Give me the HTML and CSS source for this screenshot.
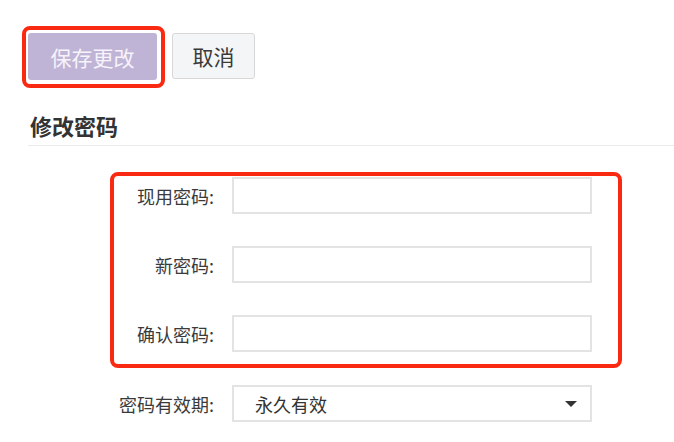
FILE: index.html
```html
<!DOCTYPE html>
<html lang="zh-CN">
<head>
    <meta charset="UTF-8">
    <title>修改密码</title>
    <link rel="stylesheet" href="styles.css">
</head>
<body>
    <div class="toolbar">
        <span class="mark mark-btn">
            <button class="btn btn-save">保存更改</button>
        </span>
        <button class="btn btn-cancel">取消</button>
    </div>
    <h2 class="title">修改密码</h2>
    <div class="mark mark-form">
        <div class="row">
            <label>现用密码:</label>
            <input type="password">
        </div>
        <div class="row">
            <label>新密码:</label>
            <input type="password">
        </div>
        <div class="row">
            <label>确认密码:</label>
            <input type="password">
        </div>
    </div>
    <div class="row row-expire">
        <label>密码有效期:</label>
        <div class="select">
            <span>永久有效</span>
            <svg width="12" height="6" viewBox="0 0 12 6"><polygon points="0,0 12,0 6,6" fill="#333"/></svg>
        </div>
    </div>
</body>
</html>
```

FILE: styles.css
```css
*{
    margin: 0;
    padding: 0;
    box-sizing: border-box;
}
body{
    font-family: "Noto Sans CJK SC", "Liberation Sans", sans-serif;
    color: #333;
    background: #fff;
}
.toolbar{
    display: flex;
    align-items: flex-start;
    gap: 7px;
    padding: 26px 0 0 22px;
}
.mark{
    border: 4px solid #fa2a12;
    border-radius: 8px;
}
.mark-btn{
    display: flex;
    padding: 3px 4px 4px 2px;
}
.btn{
    font-family: inherit;
    font-size: 21px;
    border-radius: 3px;
    cursor: pointer;
}
.btn-save{
    height: 47px;
    width: 129px;
    background: #c0b4d6;
    color: #f6f3fa;
    border: none;
}
.btn-cancel{
    margin-top: 7px;
    height: 46px;
    width: 83px;
    background: #f4f5f6;
    color: #3a3a3a;
    border: 1px solid #d8d8d8;
}
.title{
    margin: 22px 0 0 28px;
    padding: 0 0 5px 2px;
    font-size: 22px;
    line-height: 30px;
    font-weight: bold;
    color: #333;
    border-bottom: 1px solid #ebebeb;
}
.mark-form{
    margin: 26px 0 0 110px;
    width: 512px;
    padding: 1px 0 12px;
    display: flex;
    flex-direction: column;
    gap: 32px;
}
.row{
    display: grid;
    grid-template-columns: 102px 360px;
    column-gap: 16px;
    align-items: center;
}
.row label{
    text-align: right;
    font-size: 18px;
    color: #3a3a3a;
    padding-right: 2px;
}
.row input{
    height: 37px;
    border: 2px solid #e3e3e3;
    background: #fff;
    outline: none;
}
.row-expire{
    margin: 17px 0 0 114px;
}
.select{
    height: 37px;
    border: 2px solid #e3e3e3;
    display: flex;
    align-items: center;
    justify-content: space-between;
    padding: 0 13px 0 21px;
    font-size: 18px;
    color: #333;
}
```
